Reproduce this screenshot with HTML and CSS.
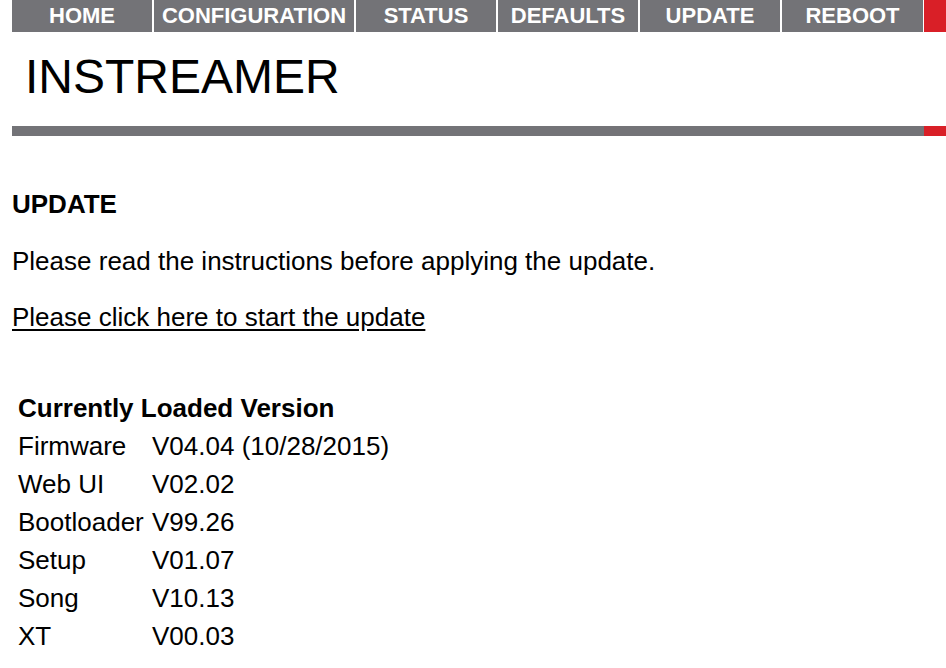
FILE: index.html
```html
<!DOCTYPE html>
<html lang="en">
<head>
<meta charset="utf-8">
<title>INSTREAMER - Update</title>
<link rel="stylesheet" href="styles.css">
</head>
<body>
<nav class="topnav">
  <a class="nav-item nav-home" href="#">HOME</a>
  <a class="nav-item nav-config" href="#">CONFIGURATION</a>
  <a class="nav-item" href="#">STATUS</a>
  <a class="nav-item" href="#">DEFAULTS</a>
  <a class="nav-item" href="#">UPDATE</a>
  <a class="nav-item nav-reboot" href="#">REBOOT</a>
  <span class="nav-accent"></span>
</nav>
<header class="brand">
  <h1 class="brand-title">INSTREAMER</h1>
</header>
<div class="rule"><span class="rule-accent"></span></div>
<main class="content">
  <h2 class="section-title">UPDATE</h2>
  <p class="intro">Please read the instructions before applying the update.</p>
  <p class="start"><a class="start-link" href="#">Please click here to start the update</a></p>
  <table class="versions">
    <thead>
      <tr><th colspan="2">Currently Loaded Version</th></tr>
    </thead>
    <tbody>
      <tr><td class="label">Firmware</td><td>V04.04 (10/28/2015)</td></tr>
      <tr><td class="label">Web UI</td><td>V02.02</td></tr>
      <tr><td class="label">Bootloader</td><td>V99.26</td></tr>
      <tr><td class="label">Setup</td><td>V01.07</td></tr>
      <tr><td class="label">Song</td><td>V10.13</td></tr>
      <tr><td class="label">XT</td><td>V00.03</td></tr>
    </tbody>
  </table>
</main>
</body>
</html>
```

FILE: styles.css
```css
html, body {
  margin: 0;
  padding: 0;
  background: #ffffff;
}

body {
  font-family: "Liberation Sans", Arial, Helvetica, sans-serif;
  color: #000000;
  overflow: hidden;
}

.topnav {
  display: flex;
  gap: 2px;
  height: 32px;
  margin-left: 12px;
}

.nav-item {
  display: block;
  width: 140px;
  height: 32px;
  background: #737377;
  color: #ffffff;
  font-weight: bold;
  font-size: 22px;
  line-height: 32px;
  text-align: center;
  text-decoration: none;
}

.nav-config {
  width: 200px;
}

.nav-reboot {
  width: 141px;
}

.nav-accent {
  flex: 1;
  margin-left: -1px;
  background: #d91f27;
}

.brand {
  height: 94px;
  padding-left: 25px;
}

.brand-title {
  margin: 0;
  padding-top: 16px;
  font-size: 48px;
  font-weight: normal;
  line-height: 58px;
}

.rule {
  display: flex;
  justify-content: flex-end;
  height: 10px;
  margin-left: 12px;
  background: #737377;
}

.rule-accent {
  width: 22px;
  background: #d91f27;
}

.content {
  padding-left: 12px;
  font-size: 26px;
  line-height: 30px;
}

.section-title {
  margin: 53px 0 0;
  font-size: 26px;
  font-weight: bold;
  line-height: 30px;
}

.intro {
  margin: 27px 0 0;
}

.start {
  margin: 25.6px 0 0;
}

.start-link {
  color: #000000;
  text-decoration: underline;
  text-underline-offset: 3px;
}

.versions {
  margin: 57.5px 0 0 6px;
  border-collapse: collapse;
  font-size: 26px;
  line-height: 38px;
}

.versions th {
  padding: 0;
  text-align: left;
  font-weight: bold;
}

.versions td {
  padding: 0;
  white-space: nowrap;
}

.versions .label {
  width: 134px;
}
```
